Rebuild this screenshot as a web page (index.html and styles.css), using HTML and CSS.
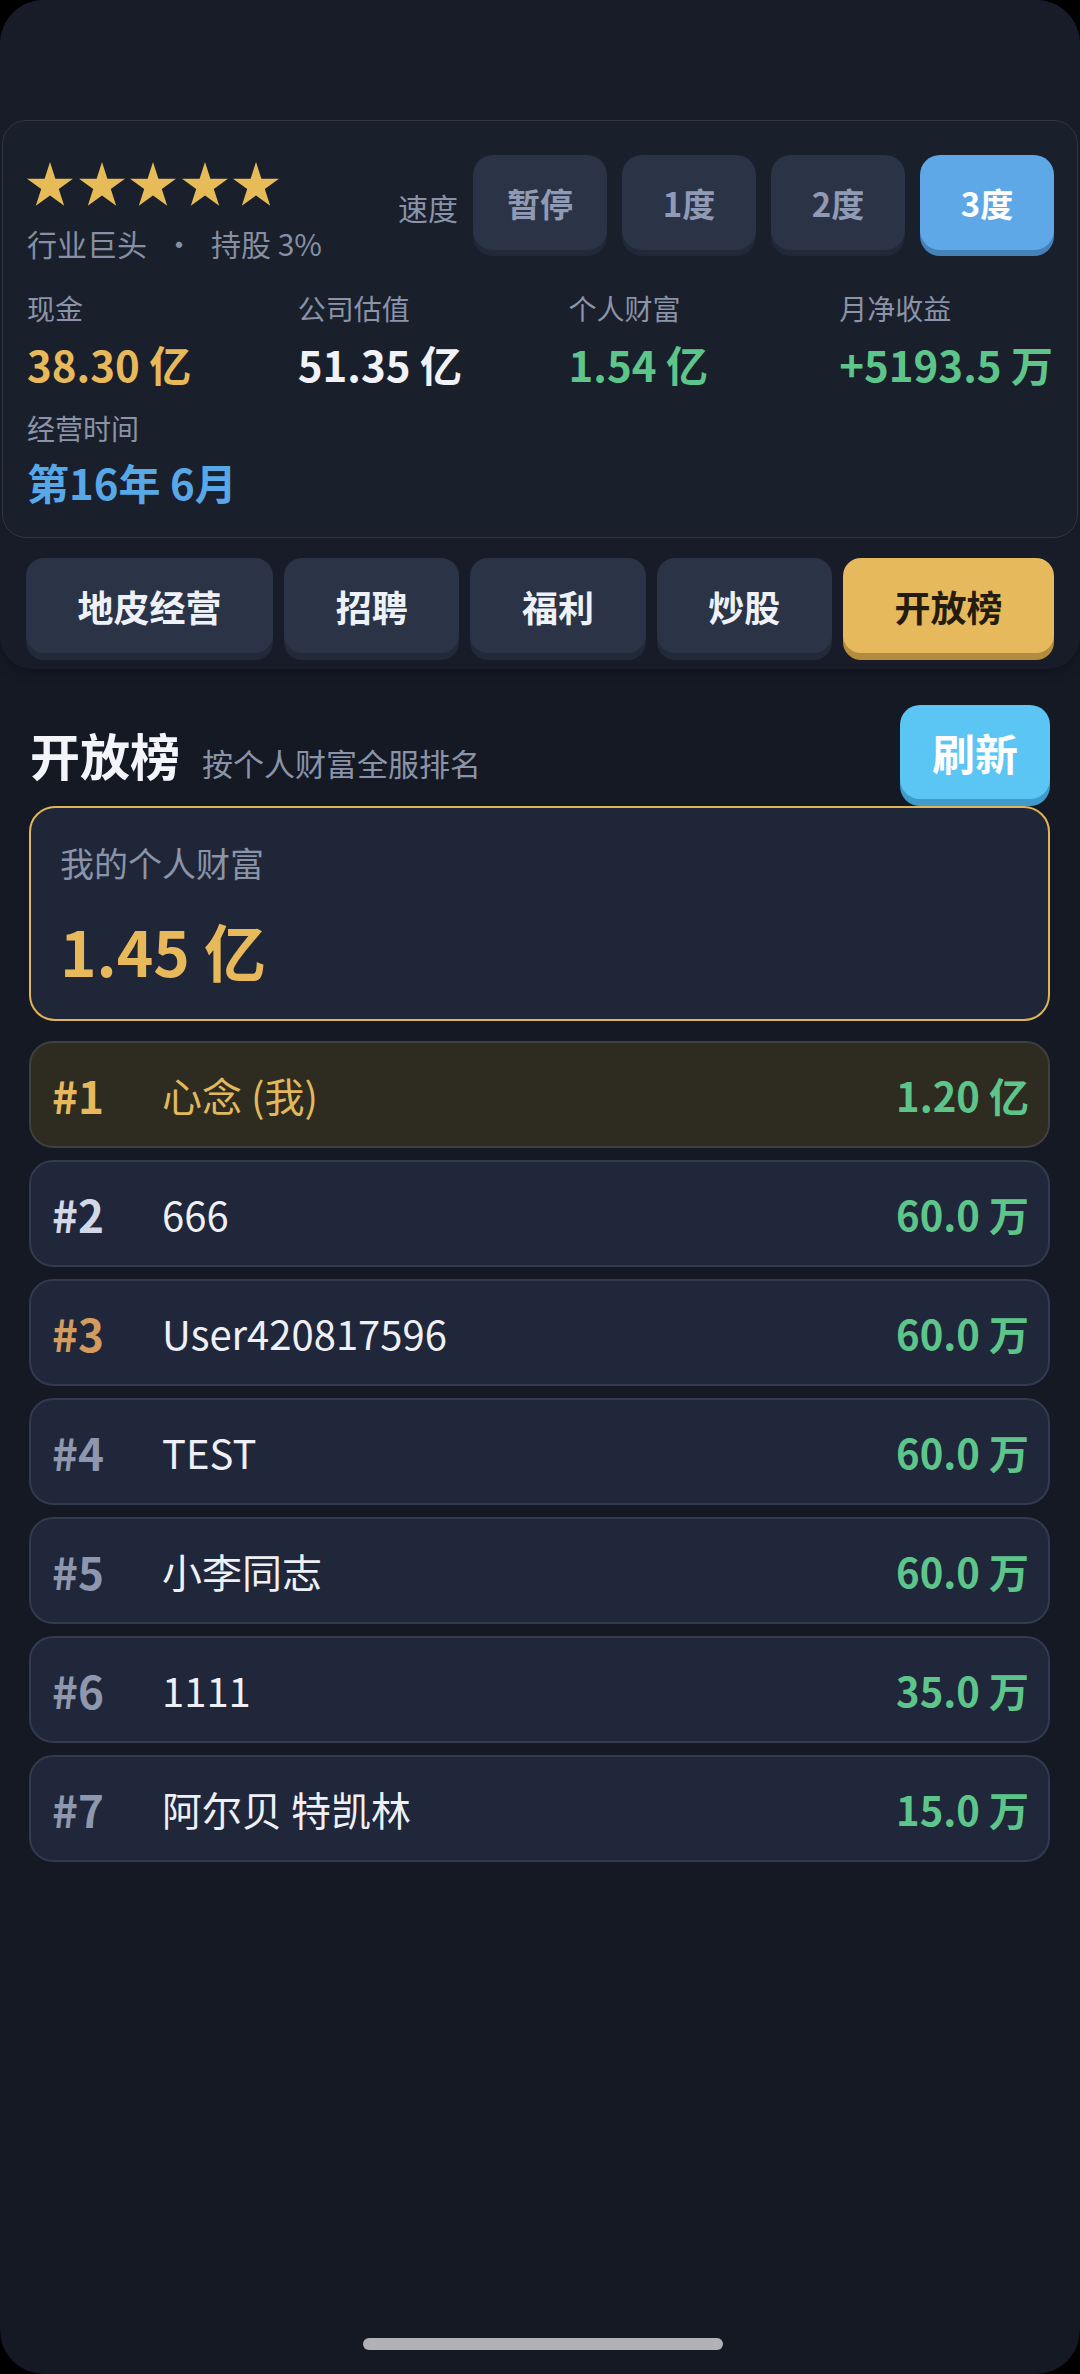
FILE: index.html
```html
<!DOCTYPE html>
<html lang="zh-CN">

<head>
    <meta charset="UTF-8">
    <meta name="viewport" content="width=device-width, initial-scale=1.0">
    <title>开放榜</title>
    <link rel="stylesheet" href="styles.css">
</head>

<body>
    <div class="pantalla">
        <header class="cabecera">
            <section class="tarjeta">
                <div class="fila-top">
                    <div class="nivel">
                        <div class="estrellas">
                            <svg viewBox="0 0 46 44"><polygon points="23,0 28.4,16.7 46,16.7 31.8,27.1 37.2,43.8 23,33.4 8.8,43.8 14.2,27.1 0,16.7 17.6,16.7"/></svg>
                            <svg viewBox="0 0 46 44"><polygon points="23,0 28.4,16.7 46,16.7 31.8,27.1 37.2,43.8 23,33.4 8.8,43.8 14.2,27.1 0,16.7 17.6,16.7"/></svg>
                            <svg viewBox="0 0 46 44"><polygon points="23,0 28.4,16.7 46,16.7 31.8,27.1 37.2,43.8 23,33.4 8.8,43.8 14.2,27.1 0,16.7 17.6,16.7"/></svg>
                            <svg viewBox="0 0 46 44"><polygon points="23,0 28.4,16.7 46,16.7 31.8,27.1 37.2,43.8 23,33.4 8.8,43.8 14.2,27.1 0,16.7 17.6,16.7"/></svg>
                            <svg viewBox="0 0 46 44"><polygon points="23,0 28.4,16.7 46,16.7 31.8,27.1 37.2,43.8 23,33.4 8.8,43.8 14.2,27.1 0,16.7 17.6,16.7"/></svg>
                        </div>
                        <div class="titulo">行业巨头<span class="punto">·</span>持股 3%</div>
                    </div>
                    <div class="velocidad">
                        <span class="etiqueta-vel">速度</span>
                        <button class="btn-vel">暂停</button>
                        <button class="btn-vel">1度</button>
                        <button class="btn-vel">2度</button>
                        <button class="btn-vel activo">3度</button>
                    </div>
                </div>
                <div class="datos">
                    <div class="dato">
                        <div class="dato-label">现金</div>
                        <div class="dato-valor oro">38.30 亿</div>
                    </div>
                    <div class="dato">
                        <div class="dato-label">公司估值</div>
                        <div class="dato-valor">51.35 亿</div>
                    </div>
                    <div class="dato">
                        <div class="dato-label">个人财富</div>
                        <div class="dato-valor verde">1.54 亿</div>
                    </div>
                    <div class="dato">
                        <div class="dato-label">月净收益</div>
                        <div class="dato-valor verde">+5193.5 万</div>
                    </div>
                    <div class="dato tiempo">
                        <div class="dato-label">经营时间</div>
                        <div class="dato-valor azul">第16年 6月</div>
                    </div>
                </div>
            </section>
            <nav class="pestanas">
                <button class="pestana">地皮经营</button>
                <button class="pestana">招聘</button>
                <button class="pestana">福利</button>
                <button class="pestana">炒股</button>
                <button class="pestana activo">开放榜</button>
            </nav>
        </header>

        <main class="ranking">
            <div class="ranking-head">
                <div class="ranking-titulo">
                    <h1>开放榜</h1>
                    <span class="subtitulo">按个人财富全服排名</span>
                </div>
                <button class="btn-refrescar">刷新</button>
            </div>

            <div class="mi-riqueza">
                <div class="mi-label">我的个人财富</div>
                <div class="mi-valor">1.45 亿</div>
            </div>

            <ul class="lista">
                <li class="fila yo">
                    <span class="pos oro">#1</span>
                    <span class="nombre">心念 (我)</span>
                    <span class="monto">1.20 亿</span>
                </li>
                <li class="fila">
                    <span class="pos plata">#2</span>
                    <span class="nombre">666</span>
                    <span class="monto">60.0 万</span>
                </li>
                <li class="fila">
                    <span class="pos bronce">#3</span>
                    <span class="nombre">User420817596</span>
                    <span class="monto">60.0 万</span>
                </li>
                <li class="fila">
                    <span class="pos">#4</span>
                    <span class="nombre">TEST</span>
                    <span class="monto">60.0 万</span>
                </li>
                <li class="fila">
                    <span class="pos">#5</span>
                    <span class="nombre">小李同志</span>
                    <span class="monto">60.0 万</span>
                </li>
                <li class="fila">
                    <span class="pos">#6</span>
                    <span class="nombre">1111</span>
                    <span class="monto">35.0 万</span>
                </li>
                <li class="fila">
                    <span class="pos">#7</span>
                    <span class="nombre">阿尔贝 特凯林</span>
                    <span class="monto">15.0 万</span>
                </li>
            </ul>
        </main>

        <div class="barra-home"></div>
    </div>
</body>

</html>
```

FILE: styles.css
```css
body {
    margin: 0;
    background-color: #000;
    font-family: "Noto Sans CJK SC", "Noto Sans", sans-serif;
    color: #eef1f8;
}

.pantalla {
    position: relative;
    height: 2374px;
    overflow: hidden;
    border-radius: 44px;
    background-color: #141924;
}

button {
    font-family: inherit;
    border: none;
    cursor: pointer;
}

/* cabecera con la tarjeta de datos y las pestañas */
.cabecera {
    padding: 120px 2px 16px;
    background-color: #181c29;
    border-radius: 0 0 32px 32px;
    box-shadow: 0 4px 12px rgba(0, 0, 0, 0.25);
}

.tarjeta {
    padding: 34px 23px 30px 24px;
    border: 1px solid #2e3547;
    border-radius: 24px;
    background-color: #1a1f2c;
}

.fila-top {
    display: flex;
    justify-content: space-between;
    align-items: flex-start;
}

.nivel {
    padding-top: 7px;
}

.estrellas {
    display: flex;
    height: 44px;
}

.estrellas svg {
    width: 46px;
    height: 44px;
    margin-right: 5.5px;
    fill: #e8bb59;
}

.titulo {
    margin-top: 17px;
    font-size: 30px;
    line-height: 40px;
    color: #868fa3;
}

.punto {
    margin: 0 17px;
}

.velocidad {
    display: flex;
    align-items: center;
    gap: 15px;
}

.etiqueta-vel {
    font-size: 30px;
    color: #8a93a7;
    padding-top: 8px;
}

.btn-vel {
    width: 134px;
    height: 95px;
    border-radius: 20px;
    background-color: #2b3346;
    box-shadow: 0 6px 0 #212838;
    color: #909ab4;
    font-size: 33px;
    font-weight: 700;
}

.btn-vel.activo {
    background-color: #5ea8e8;
    box-shadow: 0 6px 0 #4681ba;
    color: #fff;
}

.datos {
    display: grid;
    grid-template-columns: repeat(4, 1fr);
    column-gap: 56px;
    margin-top: 27px;
}

.dato-label {
    font-size: 28px;
    line-height: 36px;
    color: #8a93a7;
}

.dato-valor {
    margin-top: 13px;
    font-size: 42px;
    line-height: 50px;
    font-weight: 700;
    color: #f0f2f8;
    white-space: nowrap;
}

.tiempo {
    grid-column: 1 / 3;
    margin-top: 21px;
}

.tiempo .dato-valor {
    margin-top: 11px;
}

.oro { color: #e8b95b; }
.verde { color: #5ec58a; }
.azul { color: #58a7e6; }

.pestanas {
    display: flex;
    gap: 11px;
    margin-top: 20px;
    padding: 0 24px;
}

.pestana {
    flex: 1 1 auto;
    height: 95px;
    padding: 0 18px;
    border-radius: 18px;
    background-color: #2b3346;
    box-shadow: 0 7px 0 #222938;
    color: #eef1f8;
    font-size: 36px;
    font-weight: 700;
}

.pestana.activo {
    background-color: #e6b95c;
    box-shadow: 0 7px 0 #b38c3f;
    color: #241c0e;
}

/* sección del ranking */
.ranking {
    padding: 36px 30px 0 29px;
}

.ranking-head {
    display: flex;
    justify-content: space-between;
    align-items: center;
}

.ranking-titulo {
    display: flex;
    align-items: baseline;
    padding-top: 4px;
}

h1 {
    margin: 0 0 0 1px;
    font-size: 50px;
    line-height: 60px;
    font-weight: 700;
    color: #f3f5fa;
}

.subtitulo {
    margin-left: 22px;
    font-size: 31px;
    color: #8a93a8;
}

.btn-refrescar {
    width: 150px;
    height: 94px;
    border-radius: 20px;
    background-color: #5bc5f3;
    box-shadow: 0 7px 0 #3e9bcb;
    color: #fff;
    font-size: 43px;
    font-weight: 700;
}

.mi-riqueza {
    margin-top: 7px;
    padding: 35px 29px 34px;
    border: 2px solid #e0b45b;
    border-radius: 26px;
    background-color: #1f2637;
}

.mi-label {
    font-size: 34px;
    line-height: 40px;
    color: #8a93a8;
}

.mi-valor {
    margin-top: 32px;
    font-size: 62px;
    line-height: 70px;
    font-weight: 700;
    color: #e8b95b;
}

.lista {
    list-style: none;
    margin: 20px 0 0;
    padding: 0;
    display: flex;
    flex-direction: column;
    gap: 12px;
}

.fila {
    display: flex;
    align-items: center;
    height: 103px;
    padding: 0 19px 0 21px;
    border: 2px solid #323a4f;
    border-radius: 24px;
    background-color: #20273a;
    font-size: 40px;
}

.fila.yo {
    background-color: #2e2c20;
    border-color: #3e3f40;
}

.pos {
    width: 110px;
    font-size: 44px;
    font-weight: 700;
    color: #8e97ad;
}

.pos.oro { color: #e8b95b; }
.pos.plata { color: #d3d8e6; }
.pos.bronce { color: #d49b5f; }

.nombre {
    flex: 1;
    color: #eef0f6;
}

.yo .nombre {
    color: #e2b85d;
}

.monto {
    font-weight: 700;
    color: #5ec58a;
}

.barra-home {
    position: absolute;
    left: 363px;
    bottom: 24px;
    width: 360px;
    height: 12px;
    border-radius: 6px;
    background-color: #b2b1b8;
}
```
